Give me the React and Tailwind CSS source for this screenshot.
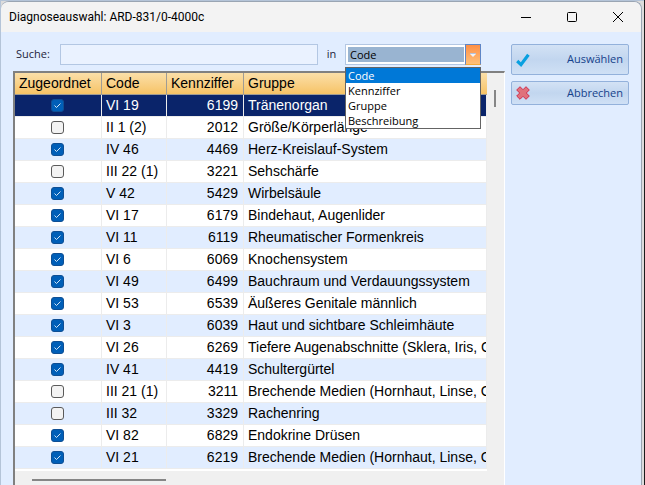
import { useState } from 'react';
import { clsx } from 'clsx';

const FIELDS = ['Code', 'Kennziffer', 'Gruppe', 'Beschreibung'];

const ROWS = [
	{ code: 'VI 19', number: 6199, group: 'Tränenorgan', assigned: true },
	{ code: 'II 1 (2)', number: 2012, group: 'Größe/Körperlänge', assigned: false },
	{ code: 'IV 46', number: 4469, group: 'Herz-Kreislauf-System', assigned: true },
	{ code: 'III 22 (1)', number: 3221, group: 'Sehschärfe', assigned: false },
	{ code: 'V 42', number: 5429, group: 'Wirbelsäule', assigned: true },
	{ code: 'VI 17', number: 6179, group: 'Bindehaut, Augenlider', assigned: true },
	{ code: 'VI 11', number: 6119, group: 'Rheumatischer Formenkreis', assigned: true },
	{ code: 'VI 6', number: 6069, group: 'Knochensystem', assigned: true },
	{ code: 'VI 49', number: 6499, group: 'Bauchraum und Verdauungssystem', assigned: true },
	{ code: 'VI 53', number: 6539, group: 'Äußeres Genitale männlich', assigned: true },
	{ code: 'VI 3', number: 6039, group: 'Haut und sichtbare Schleimhäute', assigned: true },
	{ code: 'VI 26', number: 6269, group: 'Tiefere Augenabschnitte (Sklera, Iris, Glaskörper)', assigned: true },
	{ code: 'IV 41', number: 4419, group: 'Schultergürtel', assigned: true },
	{ code: 'III 21 (1)', number: 3211, group: 'Brechende Medien (Hornhaut, Linse, Glaskörper)', assigned: false },
	{ code: 'III 32', number: 3329, group: 'Rachenring', assigned: false },
	{ code: 'VI 82', number: 6829, group: 'Endokrine Drüsen', assigned: true },
	{ code: 'VI 21', number: 6219, group: 'Brechende Medien (Hornhaut, Linse, Glaskörper)', assigned: true },
];

function TitleBar() {
	return (
		<header className="flex h-[30px] items-center justify-between bg-[#f3f3f3] pl-2 pr-[17px] text-black">
			<h1 className="font-[Roboto,sans-serif] text-[12px] leading-4">
				Diagnoseauswahl: ARD-831/0-4000c
			</h1>
			<div className="flex gap-[34px]">
				<button type="button" aria-label="Minimieren">
					<svg className="size-3" viewBox="0 0 12 12" fill="none" stroke="currentColor">
						<path d="M1 6.5H11" />
					</svg>
				</button>
				<button type="button" aria-label="Maximieren">
					<svg className="size-3" viewBox="0 0 12 12" fill="none" stroke="currentColor">
						<rect x="1.5" y="1.5" width="9" height="9" rx="1" />
					</svg>
				</button>
				<button type="button" aria-label="Schließen">
					<svg className="size-3" viewBox="0 0 12 12" fill="none" stroke="currentColor">
						<path d="M1 1L11 11M11 1L1 11" />
					</svg>
				</button>
			</div>
		</header>
	);
}

function FieldSelect({ value, onChange }) {
	return (
		<div className="relative w-[136px]">
			<div className="flex h-[21px] border border-[#b3c7e3] bg-white">
				<select
					id="field"
					value={value}
					onChange={(e) => onChange(e.target.value)}
					className="my-0.5 ml-0.5 mr-px min-w-0 flex-1 appearance-none bg-[#99b4d1] pl-0.5 text-[11px] leading-[15px] text-black outline-none"
				>
					{FIELDS.map((f) => (
						<option key={f}>{f}</option>
					))}
				</select>
				<span className="pointer-events-none -my-px -mr-px flex w-4 items-center justify-center border border-[#5f86c6] border-b-[#f5a93c] bg-linear-to-b from-[#fd8f45] to-[#ffc078]">
					<svg className="h-1 w-1.5" viewBox="0 0 6 4">
						<path d="M0 0H6V1L3 4L0 1Z" fill="#f2f4f8" />
						<path d="M0 .5H6" stroke="#b4c2dc" />
					</svg>
				</span>
			</div>
			<ul className="absolute left-0 top-[23px] z-10 w-full border border-[#646464] bg-white text-[11px] leading-[15px] text-black">
				{FIELDS.map((f) => (
					<li
						key={f}
						onClick={() => onChange(f)}
						className={clsx('pl-0.5', f === value && 'bg-[#0078d7] text-white')}
					>
						{f}
					</li>
				))}
			</ul>
		</div>
	);
}

function AssignedBox({ checked, label, onChange }) {
	return (
		<label className="relative block size-[13px]">
			<input
				type="checkbox"
				aria-label={label}
				checked={checked}
				onChange={onChange}
				className="block size-[13px] appearance-none rounded-[3px] border border-[#5a5a5a] bg-[#f3f3f3] checked:border-[#0f4f94] checked:bg-[#005fb8]"
			/>
			{checked && (
				<svg
					className="pointer-events-none absolute inset-0 size-[13px]"
					viewBox="0 0 13 13"
					fill="none"
					stroke="#d5e6f6"
				>
					<path d="M3.5 6.5L5.5 8.5L9.5 4.5" />
				</svg>
			)}
		</label>
	);
}

function DiagnosisTable({ rows, selected, onSelect, onToggle }) {
	return (
		<table className="w-full table-fixed border-separate border-spacing-0 font-['Liberation_Sans',Arial,sans-serif] text-[14px] leading-5 text-black">
			<colgroup>
				<col className="w-[87px]" />
				<col className="w-[65px]" />
				<col className="w-[77px]" />
				<col />
			</colgroup>
			<thead>
				<tr className="h-[22px] text-left">
					{['Zugeordnet', 'Code', 'Kennziffer', 'Gruppe'].map((h) => (
						<th
							key={h}
							className="border-b border-r border-[#a09c94] bg-linear-to-b from-[#fbdfa8] to-[#f6c365] p-0 pl-1 align-top font-normal last:border-r-0"
						>
							{h}
						</th>
					))}
				</tr>
			</thead>
			<tbody>
				{rows.map((r, i) => (
					<tr
						key={r.code}
						onClick={() => onSelect(i)}
						className={clsx(
							'h-[22px] *:border-b *:border-r *:border-[#ececec] *:p-0 *:align-top',
							i === selected
								? 'bg-[#0a246a] text-white'
								: i % 2 === 0
									? 'bg-[#e1edff]'
									: 'bg-white',
						)}
					>
						<td>
							<div className="flex justify-center pr-0.5 pt-1">
								<AssignedBox
									checked={r.assigned}
									label={`${r.code} zugeordnet`}
									onChange={() => onToggle(i)}
								/>
							</div>
						</td>
						<td>
							<div className="pl-1">{r.code}</div>
						</td>
						<td>
							<div className="pr-[5px] text-right">{r.number}</div>
						</td>
						<td>
							<div className="overflow-hidden whitespace-nowrap pl-1">{r.group}</div>
						</td>
					</tr>
				))}
			</tbody>
		</table>
	);
}

function ActionButton({ icon, className, children }) {
	return (
		<button
			type="button"
			className={clsx(
				'flex w-full items-center justify-between rounded-[2px] border border-[#93b1db] bg-linear-to-b from-[#d3e2f5] from-0% via-[#c2d6ef] via-50% to-[#cfe0f5] pl-1 pr-[5px] text-[11px] text-[#15428b]',
				className,
			)}
		>
			{icon}
			{children}
		</button>
	);
}

const checkIcon = (
	<svg className="size-[14px]" viewBox="0 0 14 14" fill="none">
		<path d="M1.2 8L5 11.6L12.4 1.8" stroke="#09a0e0" strokeWidth="3.2" />
	</svg>
);

const crossIcon = (
	<svg className="size-[14px]" viewBox="0 0 14 14">
		<path
			d="M4 .7L7 3.7L10 .7L13.3 4L10.3 7L13.3 10L10 13.3L7 10.3L4 13.3L.7 10L3.7 7L.7 4Z"
			fill="#e0717b"
			stroke="#d02c4c"
			strokeLinejoin="round"
		/>
	</svg>
);

export default function App() {
	const [query, setQuery] = useState('');
	const [field, setField] = useState('Code');
	const [rows, setRows] = useState(ROWS);
	const [selected, setSelected] = useState(0);

	const toggle = (index) =>
		setRows(rows.map((r, i) => (i === index ? { ...r, assigned: !r.assigned } : r)));

	return (
		<div className="flex min-h-screen flex-col border-r border-[#1c1c1c] bg-[#b4c4d8] pl-px pt-px font-['Open_Sans','Segoe_UI',sans-serif]">
			<div className="flex flex-1 bg-[#dcdcdc] pr-0.5">
				<div className="flex min-w-0 flex-1 flex-col overflow-hidden rounded-t-lg border-r border-t border-[#9aa5b3] bg-[#e1edff]">
					<TitleBar />
					<div className="flex flex-1 gap-1.5 pl-3 pr-3 pt-3">
						<main className="flex min-w-0 flex-1 flex-col gap-1.5">
							<div className="flex items-center pl-[3px] pr-6 text-[11px] text-[#1e1e3c]">
								<label htmlFor="search" className="w-11">
									Suche:
								</label>
								<input
									id="search"
									value={query}
									onChange={(e) => setQuery(e.target.value)}
									className="h-[21px] min-w-0 flex-1 border border-[#b3c7e3] bg-[#eaf2ff] px-1 text-black outline-none"
								/>
								<label htmlFor="field" className="w-[27px] text-center">
									in
								</label>
								<FieldSelect value={field} onChange={setField} />
							</div>
							<section className="flex flex-1 flex-col border-l-2 border-r border-t-2 border-l-[#808080] border-r-white border-t-[#808080] bg-[#f0f0f0]">
								<div className="flex">
									<div className="min-w-0 flex-1 overflow-hidden bg-white pb-0.5">
										<DiagnosisTable
											rows={rows}
											selected={selected}
											onSelect={setSelected}
											onToggle={toggle}
										/>
									</div>
									<div className="w-[17px] pl-[7px] pt-[17px]">
										<div className="h-[17px] w-0.5 bg-[#868686]" />
									</div>
								</div>
								<div className="h-[14px] pl-[17px] pt-2">
									<div className="h-0.5 w-[134px] bg-[#868686]" />
								</div>
							</section>
						</main>
						<aside className="flex w-[118px] flex-col gap-1.5">
							<ActionButton icon={checkIcon} className="h-[31px]">
								Auswählen
							</ActionButton>
							<ActionButton icon={crossIcon} className="h-6">
								Abbrechen
							</ActionButton>
						</aside>
					</div>
				</div>
			</div>
		</div>
	);
}
